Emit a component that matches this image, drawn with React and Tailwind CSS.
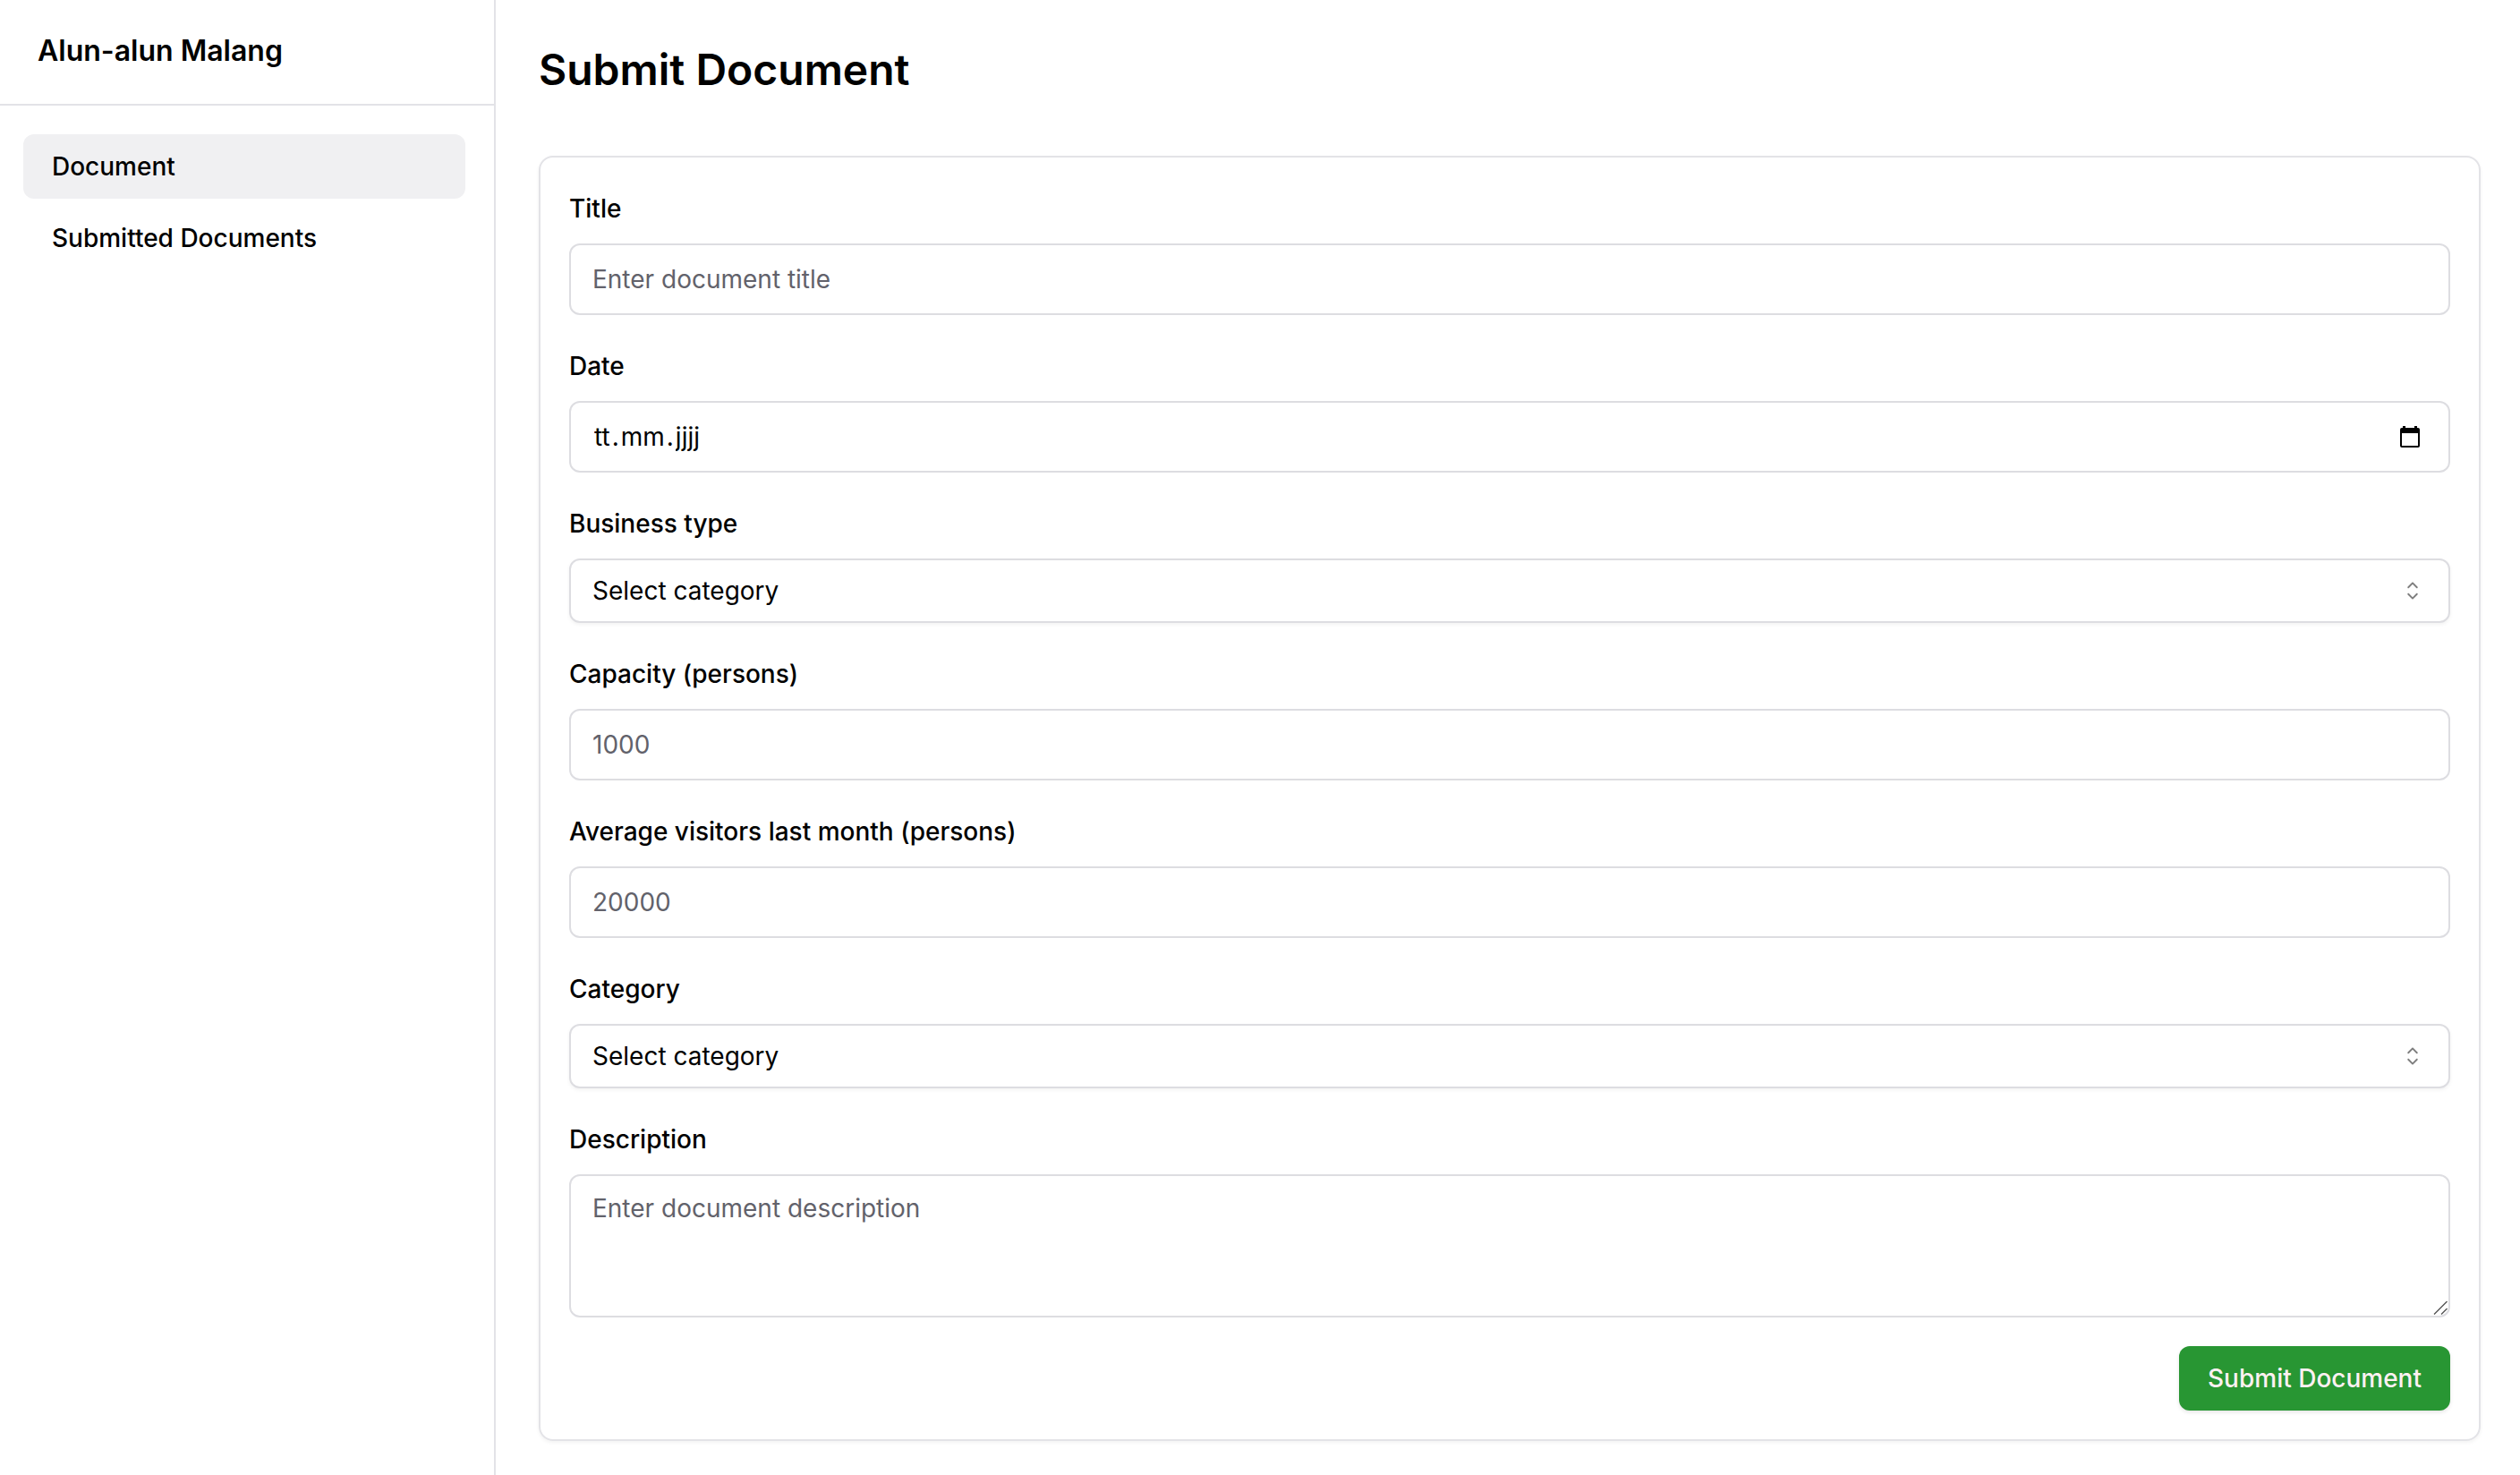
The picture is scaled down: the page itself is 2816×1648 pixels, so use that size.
import React from "react";

const frame = "w-full rounded-[12px] border-2 border-[#dddde1] bg-white px-6 text-[28px] leading-10 text-black";
const control = `${frame} block outline-none placeholder:text-[#62626b] placeholder:opacity-100`;

function Field({ id, label, children }) {
  return (
    <div className="flex flex-col gap-[14px]">
      <label htmlFor={id} className="self-start text-[28px] font-medium leading-[50px]">
        {label}
      </label>
      {children}
    </div>
  );
}

function TextField({ id, label, placeholder, inputMode }) {
  return (
    <Field id={id} label={label}>
      <input id={id} type="text" inputMode={inputMode} placeholder={placeholder} className={`${control} h-20`} />
    </Field>
  );
}

function CalendarIcon() {
  return (
    <svg viewBox="0 0 22 24" className="h-6 w-[22px]" fill="currentColor" aria-hidden="true">
      <path
        fillRule="evenodd"
        d="M3 0h3v2h10V0h3v2h1a2 2 0 0 1 2 2v18a2 2 0 0 1-2 2H2a2 2 0 0 1-2-2V4a2 2 0 0 1 2-2h1ZM2 8v14h18V8Z"
      />
    </svg>
  );
}

function DatePart({ id, label, value, maxLength }) {
  return (
    <input
      id={id}
      type="text"
      aria-label={label}
      defaultValue={value}
      maxLength={maxLength}
      className="field-sizing-content px-0.5 outline-none"
    />
  );
}

function DateField({ id, label }) {
  return (
    <Field id={id} label={label}>
      <div role="group" aria-label={label} className={`${frame} flex h-20 items-center`}>
        <DatePart id={id} label="Date, day" value="tt" maxLength={2} />
        <span>.</span>
        <DatePart label="Date, month" value="mm" maxLength={2} />
        <span>.</span>
        <DatePart label="Date, year" value="jjjj" maxLength={4} />
        <button type="button" aria-label="Open calendar" className="mr-2 ml-auto">
          <CalendarIcon />
        </button>
      </div>
    </Field>
  );
}

function CaretSort() {
  return (
    <svg
      viewBox="0 0 15 15"
      className="pointer-events-none absolute inset-y-0 right-[26px] my-auto size-8 opacity-50"
      fill="currentColor"
      aria-hidden="true"
    >
      <path
        fillRule="evenodd"
        clipRule="evenodd"
        d="M4.93179 5.43179C4.75605 5.60753 4.75605 5.89245 4.93179 6.06819C5.10753 6.24392 5.39245 6.24392 5.56819 6.06819L7.49999 4.13638L9.43179 6.06819C9.60753 6.24392 9.89245 6.24392 10.0682 6.06819C10.2439 5.89245 10.2439 5.60753 10.0682 5.43179L7.81819 3.18179C7.73379 3.0974 7.61933 3.04999 7.49999 3.04999C7.38064 3.04999 7.26618 3.0974 7.18179 3.18179L4.93179 5.43179ZM10.0682 9.56819L7.81819 11.8182C7.73379 11.9026 7.61933 11.95 7.49999 11.95C7.38064 11.95 7.26618 11.9026 7.18179 11.8182L4.93179 9.56819C4.75605 9.39245 4.75605 9.10753 4.93179 8.93179C5.10753 8.75606 5.39245 8.75606 5.56819 8.93179L7.49999 10.8636L9.43179 8.93179C9.60753 8.75606 9.89245 8.75606 10.0682 8.93179C10.2439 9.10753 10.2439 9.39245 10.0682 9.56819Z"
      />
    </svg>
  );
}

function SelectField({ id, label }) {
  return (
    <Field id={id} label={label}>
      <div className="relative">
        <select
          id={id}
          className={`${control} h-18 appearance-none shadow-[0_2px_4px_rgba(0,0,0,0.05)]`}
        >
          <option>Select category</option>
        </select>
        <CaretSort />
      </div>
    </Field>
  );
}

export default function App() {
  return (
    <div className="flex min-h-screen bg-white font-['Inter',sans-serif] text-black">
      <aside className="w-[554px] shrink-0 border-r-2 border-[#e3e3e7]">
        <div className="border-b-2 border-[#e3e3e7] px-[42px] pt-[33px] pb-[35px]">
          <p className="text-[32px] font-semibold leading-12">Alun-alun Malang</p>
        </div>
        <nav className="flex flex-col gap-2 py-8 pr-8 pl-[26px]">
          <a href="#document" className="rounded-[12px] bg-[#f0f0f2] px-8 py-4 text-[28px] font-medium leading-10">
            Document
          </a>
          <a href="#submitted" className="rounded-[12px] px-8 py-4 text-[28px] font-medium leading-10">
            Submitted Documents
          </a>
        </nav>
      </aside>

      <main className="min-w-0 flex-1 pt-[46px] pr-11 pl-12">
        <h1 className="mb-16 text-[48px] font-semibold leading-16">Submit Document</h1>
        <form
          onSubmit={(e) => e.preventDefault()}
          className="flex flex-col gap-8 rounded-[16px] border-2 border-[#e3e3e7] p-8 shadow-[0_2px_4px_rgba(0,0,0,0.05)]"
        >
          <TextField id="title" label="Title" placeholder="Enter document title" />
          <DateField id="date" label="Date" />
          <SelectField id="business-type" label="Business type" />
          <TextField id="capacity" label="Capacity (persons)" placeholder="1000" inputMode="numeric" />
          <TextField
            id="visitors"
            label="Average visitors last month (persons)"
            placeholder="20000"
            inputMode="numeric"
          />
          <SelectField id="category" label="Category" />
          <Field id="description" label="Description">
            <div className="relative">
              <textarea
                id="description"
                placeholder="Enter document description"
                className={`${control} h-40 resize-none py-4`}
              />
              <svg
                viewBox="0 0 16 16"
                className="pointer-events-none absolute right-[3px] bottom-[3px] size-4"
                stroke="#555"
                strokeWidth="1.4"
                aria-hidden="true"
              >
                <path d="M1 15.5 15.5 1M9 15.5 15.5 9" />
              </svg>
            </div>
          </Field>
          <button
            type="submit"
            className="h-18 self-end rounded-[12px] bg-[#289633] px-8 text-[28px] font-medium leading-10 text-[#fff1f2] shadow-[0_2px_4px_rgba(0,0,0,0.1)]"
          >
            Submit Document
          </button>
        </form>
      </main>
    </div>
  );
}
